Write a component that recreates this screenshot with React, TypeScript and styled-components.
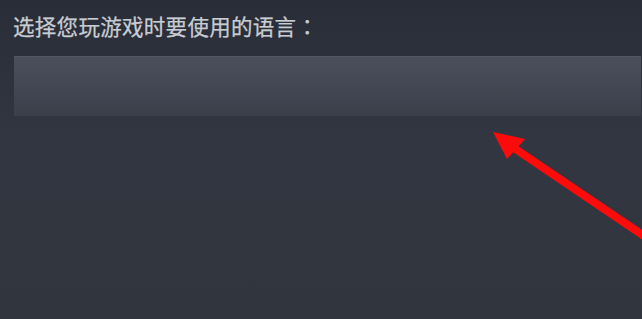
import React from "react";
import styled, { createGlobalStyle } from "styled-components";

const Global = createGlobalStyle`
  html, body { margin: 0; padding: 0; }
  body {
    width: 642px;
    height: 319px;
    overflow: hidden;
    background: #30353f;
    font-family: "Noto Sans CJK SC", "Noto Sans", sans-serif;
  }
`;

const Page = styled.div`
  position: relative;
  width: 642px;
  height: 319px;
  box-sizing: border-box;
  padding: 11px 1px 0 13px;
  background: linear-gradient(180deg, #292d37 0px, #2d313b 60px, #323640 140px, #30353e 319px);
  display: flex;
  flex-direction: column;
  gap: 15px;
`;

const Label = styled.div`
  font-size: 21.5px;
  line-height: 30px;
  letter-spacing: 0.3px;
  color: #c8ccd3;
  white-space: nowrap;
  -webkit-text-stroke: 0.25px #c8ccd3;
`;

const Colon = styled.span`
  font-family: "Noto Sans CJK JP", "Noto Sans CJK SC", sans-serif;
`;

const SelectBox = styled.div`
  height: 60px;
  margin-left: 1px;
  background: linear-gradient(180deg, #4a4f5b 0%, #444955 40%, #3b3f4a 100%);
  border-top: 1px solid #525764;
  box-sizing: border-box;
`;

const Overlay = styled.svg`
  position: absolute;
  left: 0;
  top: 0;
  width: 642px;
  height: 319px;
  pointer-events: none;
`;

export default function App() {
  return (
    <>
      <Global />
      <Page>
        <Label>
          选择您玩游戏时要使用的语言<Colon>：</Colon>
        </Label>
        <SelectBox />
        <Overlay viewBox="0 0 642 319">
          <line x1="511" y1="146" x2="650" y2="240" stroke="#ff0a0a" strokeWidth="8" />
          <polygon points="493,132 525,139 507,159" fill="#ff0a0a" />
        </Overlay>
      </Page>
    </>
  );
}
